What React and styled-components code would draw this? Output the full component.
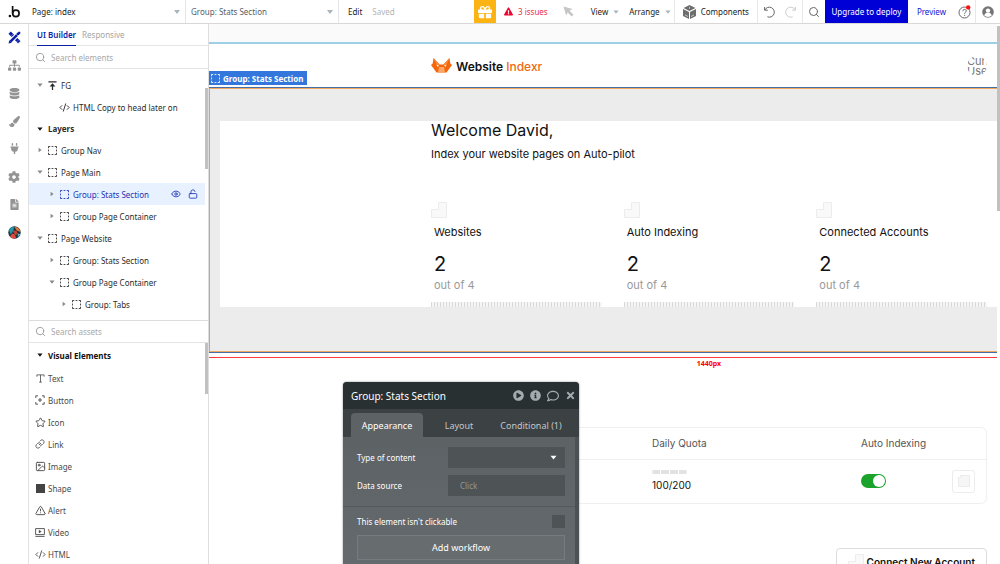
import React, { useState } from 'react';
import styled, { createGlobalStyle } from 'styled-components';
import { FaSitemap, FaDatabase, FaPaintBrush, FaPlug, FaCog, FaFileAlt, FaGift, FaExclamationTriangle, FaPlayCircle, FaInfoCircle, FaRegComment, FaTimes } from 'react-icons/fa';
import { Star, Link, Image as ImageIcon, TriangleAlert, Search, Eye, LockOpen, CodeXml } from 'lucide-react';

const EDITOR_FONT = '"Noto Sans", "Open Sans", sans-serif';
const PAGE_FONT = 'Inter, "Liberation Sans", sans-serif';
const BLUE = '#0b1fa8';

const GlobalStyle = createGlobalStyle`
  * {
    box-sizing: border-box;
  }
  body {
    margin: 0;
    font-family: ${EDITOR_FONT};
    font-size: 8px;
    color: #222;
    background: #fff;
  }
  button, input, select {
    font: inherit;
    color: inherit;
    border: 0;
    margin: 0;
    padding: 0;
    background: none;
    border-radius: 0;
    outline: none;
  }
  button {
    cursor: pointer;
  }
  svg {
    display: block;
    flex: none;
  }
`;

const Editor = styled.div`
  height: 100vh;
  display: flex;
  flex-direction: column;
  overflow: hidden;
`;

/* ---------- top bar ---------- */

const TopBar = styled.header`
  display: flex;
  align-items: stretch;
  height: 24px;
  flex: none;
  border-bottom: 1px solid #d8d8d8;
  white-space: nowrap;
`;

const LogoCell = styled.div`
  width: 29px;
  display: flex;
  align-items: center;
  justify-content: center;
`;

const SelectCell = styled.label`
  position: relative;
  width: ${props => props.$width}px;
  display: flex;
  align-items: center;
  border-right: 1px solid #e2e6e8;
`;

const TopSelect = styled.select`
  appearance: none;
  width: 100%;
  height: 100%;
  padding: 0 16px 0 ${props => (props.$muted ? 5 : 3)}px;
  color: ${props => (props.$muted ? '#55606a' : '#222')};
`;

const SelectCaret = styled.svg`
  position: absolute;
  right: 5px;
  pointer-events: none;
`;

const TopButton = styled.button`
  display: flex;
  align-items: center;
  gap: 5px;
  padding: 0 ${props => props.$pad || 0}px;
  color: ${props => props.$color || '#222'};
  border-left: ${props => (props.$line ? '1px solid #e8e8e8' : '0')};
`;

const EditButton = styled(TopButton)`
  margin-left: 9px;
`;

const Saved = styled.span`
  align-self: center;
  margin-left: 10px;
  color: #b4b4b4;
`;

const Spacer = styled.div`
  flex: 1;
`;

const Divide = styled.span`
  width: 3px;
  flex: none;
`;

const GiftButton = styled.button`
  width: 22px;
  background: #fcb415;
  color: #fff;
  display: flex;
  align-items: center;
  justify-content: center;
`;

const DeployButton = styled.button`
  width: 83px;
  background: #0000d6;
  color: #fff;
`;

const PreviewLink = styled.a`
  align-self: center;
  padding: 0 12px 0 9px;
  color: #1414d2;
  text-decoration: none;
`;

/* ---------- left side ---------- */

const Body = styled.div`
  display: flex;
  flex: 1;
  min-height: 0;
`;

const Rail = styled.nav`
  width: 29px;
  flex: none;
  border-right: 1px solid #e2e2e2;
`;

const RailItems = styled.div`
  display: flex;
  flex-direction: column;
  height: 222px;
`;

const RailButton = styled.button`
  flex: 1;
  display: flex;
  align-items: center;
  justify-content: center;
  color: ${props => (props.$active ? BLUE : '#949494')};
`;

const SidePanel = styled.aside`
  width: 180px;
  flex: none;
  display: flex;
  flex-direction: column;
  border-right: 1px solid #dedede;
`;

const PanelTabs = styled.div`
  display: flex;
  gap: 6px;
  height: 22px;
  flex: none;
  padding-left: 8px;
  border-bottom: 1px solid #e4e4e4;
`;

const PanelTab = styled.button`
  color: ${props => (props.$active ? BLUE : '#a5a5a5')};
  font-weight: ${props => (props.$active ? 600 : 400)};
  box-shadow: ${props => (props.$active ? `0 1px 0 ${BLUE}` : 'none')};
`;

const SearchBox = styled.label`
  display: flex;
  align-items: center;
  gap: 5px;
  height: 23px;
  flex: none;
  padding-left: 6px;
  border-bottom: 1px solid #e4e4e4;
  border-top: ${props => (props.$ruled ? '1px solid #dcdcdc' : '0')};
  color: #999;

  input {
    flex: 1;
    min-width: 0;
    color: #444;
  }
  input::placeholder {
    color: #a8a8a8;
    opacity: 1;
  }
`;

const ScrollArea = styled.div`
  display: flex;
  height: ${props => (props.$height ? `${props.$height}px` : 'auto')};
  flex: ${props => (props.$height ? 'none' : '1')};
  min-height: 0;
  overflow: hidden;
`;

const ScrollThumb = styled.div`
  width: 3px;
  flex: none;
  height: ${props => props.$height}px;
  margin-top: ${props => props.$top}px;
  background: #c1c1c1;
`;

const TreeList = styled.div`
  flex: 1;
  min-width: 0;
  display: flex;
  flex-direction: column;
  justify-content: flex-end;
  padding-bottom: 5px;
`;

const TreeRow = styled.div`
  display: flex;
  align-items: center;
  gap: ${props => (props.$section ? 5 : 4)}px;
  height: ${props => (props.$section ? 21 : 22)}px;
  flex: none;
  padding-left: ${props => 8 + props.$level * 12}px;
  padding-right: 7px;
  background: ${props => (props.$selected ? '#e8f1ff' : 'transparent')};
  color: ${props => (props.$selected ? '#1a33b8' : '#2b2b2b')};
  font-weight: ${props => (props.$section ? 700 : 400)};
  white-space: nowrap;
`;

const LeafGap = styled.span`
  width: 6px;
  flex: none;
`;

const IconSlot = styled.span`
  display: flex;
  justify-content: center;
  width: 10px;
  flex: none;
`;

const RowActions = styled.div`
  display: flex;
  align-items: center;
  gap: 7px;
  margin-left: auto;
`;

const AssetList = styled.div`
  flex: 1;
`;

const AssetRow = styled.button`
  display: flex;
  align-items: center;
  gap: 3px;
  width: 100%;
  height: 22px;
  padding-left: 6px;
  color: #4a4a4a;
`;

const AssetHeading = styled.div`
  display: flex;
  align-items: center;
  gap: 5px;
  height: 24px;
  padding-left: 8px;
  font-weight: 700;
  color: #111;
`;

/* ---------- canvas ---------- */

const Workspace = styled.main`
  position: relative;
  flex: 1;
  min-width: 0;
  display: flex;
  overflow: hidden;
`;

const CanvasView = styled.div`
  flex: 1;
  min-width: 0;
  overflow: hidden;
`;

const Artboard = styled.div`
  min-width: 1000px;
  font-family: ${PAGE_FONT};
  font-size: 11px;
  color: #111;
`;

const Content = styled.div`
  width: 556px;
  margin: 0 auto;
`;

const CanvasStrip = styled.div`
  height: 20px;
  background: #fafafa;
  border-bottom: 2px solid #9dcfe5;
`;

const SiteNav = styled.div`
  height: 43px;
  display: flex;
  align-items: center;
`;

const NavContent = styled(Content)`
  display: flex;
  align-items: center;
  justify-content: space-between;
`;

const Brand = styled.div`
  display: flex;
  align-items: center;
  gap: 4px;
  font-size: 12px;
  font-weight: 600;

  div {
    padding-top: 2px;
  }
  span {
    color: #f0690f;
    font-weight: 500;
  }
`;

const Avatar = styled.div`
  width: 20px;
  height: 20px;
  border-radius: 50%;
  overflow: hidden;
  line-height: 10px;
  color: #777;
`;

const SelectedSection = styled.section`
  position: relative;
  height: 264px;
  margin-top: 1px;
  padding-top: 32px;
  background: #ececec;
  border-top: 1px solid #f0a860;
  border-bottom: 1px solid #f0a860;
  box-shadow: inset 1px 0 0 #e0a060, 0 -1px 0 #456fa5, 0 1px 0 #456fa5;
`;

const SelectionLabel = styled.div`
  position: absolute;
  left: 0;
  bottom: 100%;
  margin-bottom: 4px;
  height: 14px;
  padding: 0 4px 0 2px;
  display: flex;
  align-items: center;
  gap: 3px;
  background: #3377dd;
  color: #fff;
  font-family: ${EDITOR_FONT};
  font-size: 8px;
  font-weight: 700;
  white-space: nowrap;
`;

const WhiteBlock = styled.div`
  margin: 0 11px;
  background: #fff;
`;

const Welcome = styled.h1`
  margin: 0;
  font-size: 16px;
  line-height: 18px;
  font-weight: 400;
`;

const Lead = styled.p`
  margin: 8px 0 0;
  line-height: 14px;
`;

const Stats = styled.div`
  display: grid;
  grid-template-columns: repeat(3, 1fr);
  gap: 22px;
  margin-top: 41px;
`;

const StatText = styled.div`
  padding: 7px 0 10px 3px;
  line-height: 14px;
`;

const StatNumber = styled.div`
  margin: 13px 0 2px;
  font-size: 20px;
  line-height: 24px;
`;

const StatTotal = styled.div`
  color: #999;
`;

const StatTicks = styled.div`
  height: 5px;
  background: repeating-linear-gradient(to right, #d8d8d8 0 1px, #f6f6f6 1px 3px);
`;

const WidthRuler = styled.div`
  margin-top: 5px;
  border-top: 1px solid #ff3b3b;
  padding-top: 1px;
  text-align: center;
  font-family: ${EDITOR_FONT};
  font-size: 7px;
  line-height: 9px;
  font-weight: 700;
  color: #f00;
`;

const TableFrame = styled.div`
  margin-top: 59px;
  border: 1px solid #efefef;
  border-radius: 6px;
`;

const SitesTable = styled.table`
  width: 100%;
  table-layout: fixed;
  border-collapse: collapse;
  font-size: 10px;

  th, td {
    padding: 0 0 0 12px;
    text-align: left;
    vertical-align: middle;
  }
  th {
    height: 31px;
    font-weight: 400;
    color: #555;
    border-bottom: 1px solid #efefef;
  }
  td {
    height: 44px;
  }
`;

const Quota = styled.div`
  line-height: 14px;
`;

const QuotaBar = styled.div`
  display: flex;
  gap: 1px;
  width: 35px;
  height: 4px;
  margin-bottom: 4px;
  border-radius: 2px;
  overflow: hidden;

  span {
    flex: 1;
    background: #e2e2e2;
  }
`;

const Switch = styled.input`
  appearance: none;
  display: block;
  width: 25px;
  height: 14px;
  border-radius: 7px;
  background: ${props => (props.checked ? '#1ca32c' : '#ccc')};
  cursor: pointer;

  &::before {
    content: '';
    display: block;
    width: 12px;
    height: 12px;
    margin: 1px 0 0 ${props => (props.checked ? 12 : 1)}px;
    border-radius: 50%;
    background: #fff;
  }
`;

const IconButton = styled.button`
  display: flex;
  align-items: center;
  justify-content: center;
  width: 23px;
  height: 23px;
  margin-left: auto;
  margin-right: 11px;
  border: 1px solid #ececec;
  border-radius: 3px;
`;

const ConnectButton = styled.button`
  display: flex;
  align-items: center;
  gap: 3px;
  margin: 44px 0 0 auto;
  padding: 4px 11px;
  border: 1px solid #dcdcdc;
  border-radius: 4px;
  font-size: 10px;
  font-weight: 600;
  line-height: 18px;
`;

/* ---------- property editor ---------- */

const Popup = styled.div`
  position: absolute;
  left: 134px;
  top: 358px;
  width: 236px;
  border-radius: 4px 4px 0 0;
  overflow: hidden;
  background: #5d6265;
  color: #fff;
  box-shadow: 0 0 2px rgba(0, 0, 0, 0.5);
`;

const PopupHeader = styled.div`
  display: flex;
  align-items: center;
  gap: 6px;
  height: 27px;
  padding: 0 3px 0 8px;
  background: #293032;
  font-size: 10px;
`;

const PopupTitle = styled.div`
  flex: 1;
`;

const HeaderButton = styled.button`
  color: #a4abae;
`;

const PopupTabs = styled.div`
  display: flex;
  align-items: flex-end;
  height: 28px;
  padding: 0 12px 0 8px;
  background: #3c4143;
`;

const PopupTab = styled.button`
  height: 24px;
  flex: 1 1 0;
  border-radius: 4px 4px 0 0;
  font-size: 9px;
  white-space: nowrap;
  background: ${props => (props.$active ? '#5d6265' : 'transparent')};
  color: ${props => (props.$active ? '#fff' : '#c3c7c9')};
`;

const PopupBody = styled.div`
  padding: 10px 10px 10px 14px;
  border-right: 4px solid #4c5154;
  background: linear-gradient(#5d6265, #646a6d);
`;

const Field = styled.div`
  display: flex;
  align-items: center;
  justify-content: space-between;
  height: 21px;
  margin-bottom: 7px;
`;

const CheckField = styled(Field)`
  margin-bottom: 3px;
`;

const FieldSelect = styled.div`
  position: relative;
  display: flex;
  align-items: center;
  width: 117px;
  height: 21px;

  select {
    appearance: none;
    width: 100%;
    height: 100%;
    background: #4e5356;
  }
  svg {
    position: absolute;
    right: 8px;
    pointer-events: none;
  }
`;

const FieldInput = styled.input`
  width: 117px;
  height: 21px;
  padding: 0 12px;
  background: #4e5356;

  &::placeholder {
    color: #92979a;
    opacity: 1;
  }
`;

const Divider = styled.div`
  margin: 10px -10px 4px -14px;
  border-top: 1px solid #54595c;
`;

const Check = styled.input`
  appearance: none;
  width: 13px;
  height: 13px;
  background: ${props => (props.checked ? '#aab0b3' : '#4e5356')};
`;

const WorkflowButton = styled.button`
  display: block;
  width: 100%;
  height: 25px;
  border: 1px solid #757b7e;
  background: #676c6f;
  font-size: 9px;
`;

/* ---------- drawings ---------- */

const Caret = ({ open = false, color = '#888', size = 6 }) => (
  <svg width={size} height={size} viewBox="0 0 6 6" fill={color} aria-hidden="true">
    <path d={open ? 'M.4 1.4h5.200L3 4.800z' : 'M1.600.8v4.400L4.600 3z'} />
  </svg>
);

const DashedBox = ({ size = 9 }) => (
  <svg width={size} height={size} viewBox="0 0 10 10" fill="none" stroke="currentColor" strokeWidth="1" aria-hidden="true">
    <path d="M.5 2.5v-2h2M4 .5h2M7.5.5h2v2M9.5 4v2M9.5 7.5v2h-2M6 9.5H4M2.5 9.5h-2v-2M.5 6V4" />
  </svg>
);

const BubbleLogo = () => (
  <svg width="13" height="14" viewBox="0 0 13 14" aria-hidden="true">
    <circle cx="1.9" cy="11" r="1.3" fill="#111" />
    <path d="M4.6 1v7.4" stroke="#111" strokeWidth="1.7" />
    <circle cx="7.9" cy="8.4" r="3.2" fill="none" stroke="#111" strokeWidth="1.7" />
  </svg>
);

const DesignIcon = () => (
  <svg width="13" height="13" viewBox="0 0 14 14" fill="none" stroke="currentColor" aria-hidden="true">
    <path d="M3.6 3.6l-1.800-1.800M12.200 12.200L8.800 8.800M5.200 5.200L1.800 1.800" strokeWidth="3.6" />
    <path d="M2.600 11.400L9.600 4.400" strokeWidth="2.800" />
    <path d="M10.600 3.400l1.400-1.400" strokeWidth="2.800" strokeLinecap="round" />
    <path d="M.6 13.400l.8-3.400 2.600 2.600z" fill="currentColor" stroke="none" />
    <path d="M3.800 4.800l1-1M9.600 11.400l1-1M11.200 13l1-1" stroke="#fff" strokeWidth=".7" />
  </svg>
);

const PluginAvatar = () => (
  <svg width="13" height="13" viewBox="0 0 13 13" aria-hidden="true">
    <circle cx="6.5" cy="6.5" r="6.2" fill="#1b3444" />
    <path d="M1 4.5A6.2 6.2 0 0 1 6 .4L5.6 4 2.8 8.6z" fill="#1f9aa6" />
    <path d="M6.4 1A6 6 0 0 1 12.3 6L8.8 4.6z" fill="#e87833" />
    <path d="M2 10.4l2.2-3 2.4 1.2 1.7 3.7A6 6 0 0 1 2 10.4z" fill="#e34c3c" />
    <path d="M4.5 4.4l4 .4 1.3 3-2.6 1.6z" fill="#c2452f" />
    <path d="M9.8 7.4l2.4.8-2.4 3z" fill="#69c3cf" />
  </svg>
);

const FloatingIcon = () => (
  <svg width="9" height="9" viewBox="0 0 10 10" fill="none" stroke="currentColor" strokeWidth="1.4" aria-hidden="true">
    <path d="M.5 1h9M5 10V4" />
    <path d="M1.8 6.2L5 2.6l3.2 3.6z" fill="currentColor" stroke="none" />
  </svg>
);

const ArrowIcon = () => (
  <svg width="11" height="11" viewBox="0 0 11 11" fill="#c6c6c6" aria-hidden="true">
    <path d="M.5.5l9 2.600-3 1.700 4 4-1.800 1.800-4-4-1.600 3z" />
  </svg>
);

const CubeIcon = () => (
  <svg width="13" height="14" viewBox="0 0 13 14" fill="#6d6d6d" aria-hidden="true">
    <path d="M6.5 0L12.4 3 6.5 6 .6 3z" />
    <path d="M0 4l6 3v7l-6-3z" />
    <path d="M13 4L7 7v7l6-3z" />
    <path d="M6.5 3.8v-2M8 11.5l3-1.6M5 11.5L2 9.9" stroke="#fff" strokeWidth=".6" />
  </svg>
);

const TurnIcon = ({ flip, color }) => (
  <svg width="12" height="12" viewBox="0 0 12 12" fill="none" stroke={color} strokeWidth="1" aria-hidden="true">
    <g transform={flip ? 'translate(12 0) scale(-1 1)' : undefined}>
      <path d="M1.6 1v3.2h3.2M1.8 4A5 5 0 1 1 4.4 10.8" />
    </g>
  </svg>
);

const HelpIcon = () => (
  <svg width="14" height="14" viewBox="0 0 14 14" aria-hidden="true">
    <circle cx="6.5" cy="7.5" r="5.5" fill="none" stroke="#666" strokeWidth="1" />
    <path d="M4.8 6.2c0-2.4 3.5-2.3 3.5-.2 0 1.3-1.7 1.3-1.7 2.7M6.6 9.8v1.1" fill="none" stroke="#666" strokeWidth="1" />
    <circle cx="10.2" cy="2.4" r="2.2" fill="#f11" />
  </svg>
);

const UserIcon = () => (
  <svg width="12" height="12" viewBox="0 0 12 12" aria-hidden="true">
    <circle cx="6" cy="6" r="5.8" fill="#757575" />
    <circle cx="6" cy="4.6" r="2.2" fill="#fff" />
    <path d="M2.2 9.6c.6-2.3 2-2.8 3.8-2.8s3.2.5 3.8 2.8C7.9 11.3 4.1 11.3 2.2 9.6z" fill="#fff" />
  </svg>
);

const FoxLogo = () => (
  <svg width="21" height="15" viewBox="0 0 21 15" aria-hidden="true">
    <path d="M2.5 0l6.1 6.5h3.8L18.5 0l.8 5.6L21 7l-5.5 7.5h-10L0 7l1.700-1.400z" fill="#f4660c" />
    <path d="M2.5 0l6 6.5L6 8z" fill="#f98a3a" />
    <path d="M18.5 0l-6 6.5L15 8z" fill="#f98a3a" />
    <path d="M8 9h5l1 5.5H7z" fill="#fba566" />
    <path d="M5.600 6.800l2.600 1-1.800.9zM15.400 6.800l-2.600 1 1.800.9z" fill="#fff" />
  </svg>
);

const Placeholder = () => (
  <svg width="16" height="16" viewBox="0 0 16 16" fill="#f9f9f9" stroke="#ececec" aria-hidden="true">
    <path d="M7.500.5h8v15H.5v-8h7z" />
  </svg>
);

const SmallPlaceholder = () => (
  <svg width="12" height="12" viewBox="0 0 12 12" fill="#f6f6f6" stroke="#ebebeb" aria-hidden="true">
    <path d="M2.500.5h9v11H.5v-9h2z" />
  </svg>
);

const TextIcon = () => (
  <svg width="9" height="9" viewBox="0 0 10 10" fill="none" stroke="currentColor" strokeWidth=".9" aria-hidden="true">
    <path d="M1 3V1h8v2M5 1v8M3.5 9h3" />
  </svg>
);

const ButtonIcon = () => (
  <svg width="10" height="10" viewBox="0 0 10 10" fill="none" stroke="currentColor" strokeWidth=".9" aria-hidden="true">
    <path d="M.8 3V.8H3M7 .8h2.2V3M9.2 7v2.2H7M3 9.200H.8V7M5 3v4M3 5h4" />
  </svg>
);

const ShapeIcon = () => (
  <svg width="9" height="9" viewBox="0 0 9 9" aria-hidden="true">
    <rect width="9" height="9" fill="#444" />
  </svg>
);

const VideoIcon = () => (
  <svg width="10" height="9" viewBox="0 0 10 9" fill="none" stroke="currentColor" strokeWidth=".9" aria-hidden="true">
    <path d="M.6.6h8.8v6H.6zM.4 8.400h9.2" />
    <path d="M4 2.300v2.600l2.300-1.300z" fill="currentColor" strokeWidth=".4" />
  </svg>
);

const railItems = [
  { name: 'Design', icon: <DesignIcon />, active: true },
  { name: 'Workflow', icon: <FaSitemap size={13} /> },
  { name: 'Data', icon: <FaDatabase size={11} /> },
  { name: 'Styles', icon: <FaPaintBrush size={11} /> },
  { name: 'Plugins', icon: <FaPlug size={11} /> },
  { name: 'Settings', icon: <FaCog size={12} /> },
  { name: 'Logs', icon: <FaFileAlt size={11} /> },
  { name: 'Assistant', icon: <PluginAvatar /> },
];

const treeRows = [
  { label: 'Overlays', level: 0, section: true, open: true },
  { label: 'FG', level: 0, open: true, icon: <FloatingIcon /> },
  { label: 'HTML Copy to head later on', level: 1, leaf: true, icon: <CodeXml size={11} strokeWidth={2} /> },
  { label: 'Layers', level: 0, section: true, open: true },
  { label: 'Group Nav', level: 0 },
  { label: 'Page Main', level: 0, open: true },
  { label: 'Group: Stats Section', level: 1, selected: true },
  { label: 'Group Page Container', level: 1 },
  { label: 'Page Website', level: 0, open: true },
  { label: 'Group: Stats Section', level: 1 },
  { label: 'Group Page Container', level: 1, open: true },
  { label: 'Group: Tabs', level: 2 },
];

const assets = [
  { label: 'Text', icon: <TextIcon /> },
  { label: 'Button', icon: <ButtonIcon /> },
  { label: 'Icon', icon: <Star size={11} strokeWidth={2} /> },
  { label: 'Link', icon: <Link size={10} strokeWidth={2} /> },
  { label: 'Image', icon: <ImageIcon size={11} strokeWidth={2} /> },
  { label: 'Shape', icon: <ShapeIcon /> },
  { label: 'Alert', icon: <TriangleAlert size={11} strokeWidth={2} /> },
  { label: 'Video', icon: <VideoIcon /> },
  { label: 'HTML', icon: <CodeXml size={11} strokeWidth={2} /> },
];

const stats = ['Websites', 'Auto Indexing', 'Connected Accounts'];

function EditorTopBar() {
  return (
    <TopBar>
      <LogoCell><BubbleLogo /></LogoCell>
      <SelectCell $width={157}>
        <TopSelect aria-label="Page">
          <option>Page: index</option>
        </TopSelect>
        <SelectCaret width="6" height="4" viewBox="0 0 6 4" fill="#aab4bb"><path d="M0 0h6L3 4z" /></SelectCaret>
      </SelectCell>
      <SelectCell $width={153}>
        <TopSelect aria-label="Element" $muted>
          <option>Group: Stats Section</option>
        </TopSelect>
        <SelectCaret width="6" height="4" viewBox="0 0 6 4" fill="#aab4bb"><path d="M0 0h6L3 4z" /></SelectCaret>
      </SelectCell>
      <EditButton>Edit</EditButton>
      <Saved>Saved</Saved>
      <Spacer />
      <GiftButton aria-label="Offers"><FaGift size={14} /></GiftButton>
      <TopButton $pad={8} $color="#e8304f"><FaExclamationTriangle size={9} color="#f0022e" />3 issues</TopButton>
      <TopButton $pad={7} aria-label="Inspect"><ArrowIcon /></TopButton>
      <TopButton $pad={10}>View<Caret open color="#aab4bb" /></TopButton>
      <TopButton>Arrange<Caret open color="#aab4bb" /></TopButton>
      <Divide />
      <TopButton $pad={8} $line><CubeIcon />Components</TopButton>
      <TopButton $pad={5} $line aria-label="Undo"><TurnIcon color="#666" /></TopButton>
      <TopButton $pad={5} aria-label="Redo"><TurnIcon flip color="#ccc" /></TopButton>
      <TopButton $pad={5} $line aria-label="Search"><Search size={12} color="#666" strokeWidth={2} /></TopButton>
      <DeployButton>Upgrade to deploy</DeployButton>
      <PreviewLink href="#preview">Preview</PreviewLink>
      <TopButton aria-label="Help"><HelpIcon /></TopButton>
      <Divide />
      <TopButton $pad={6} $line aria-label="Account"><UserIcon /></TopButton>
    </TopBar>
  );
}

function ElementsPanel() {
  return (
    <SidePanel>
      <PanelTabs role="tablist">
        <PanelTab role="tab" aria-selected="true" $active>UI Builder</PanelTab>
        <PanelTab role="tab" aria-selected="false">Responsive</PanelTab>
      </PanelTabs>
      <SearchBox>
        <Search size={11} strokeWidth={2} />
        <input placeholder="Search elements" aria-label="Search elements" />
      </SearchBox>
      <ScrollArea $height={251}>
        <TreeList role="tree">
          {treeRows.map((row, i) => (
            <TreeRow key={i} role="treeitem" $level={row.level} $section={row.section} $selected={row.selected}>
              {row.leaf ? <LeafGap /> : <Caret open={row.open} color={row.section ? '#111' : '#888'} />}
              {!row.section && <IconSlot>{row.icon || <DashedBox />}</IconSlot>}
              {row.label}
              {row.selected && (
                <RowActions>
                  <Eye size={10} strokeWidth={2} />
                  <LockOpen size={10} strokeWidth={2} />
                </RowActions>
              )}
            </TreeRow>
          ))}
        </TreeList>
        <ScrollThumb $top={19} $height={81} />
      </ScrollArea>
      <SearchBox $ruled>
        <Search size={11} strokeWidth={2} />
        <input placeholder="Search assets" aria-label="Search assets" />
      </SearchBox>
      <ScrollArea>
        <AssetList>
          <AssetHeading><Caret open color="#111" />Visual Elements</AssetHeading>
          {assets.map(asset => (
            <AssetRow key={asset.label}>
              <IconSlot>{asset.icon}</IconSlot>
              {asset.label}
            </AssetRow>
          ))}
        </AssetList>
        <ScrollThumb $top={0} $height={51} />
      </ScrollArea>
    </SidePanel>
  );
}

function PropertyEditor() {
  const [clickable, setClickable] = useState(false);

  return (
    <Popup role="dialog" aria-label="Group: Stats Section">
      <PopupHeader>
        <PopupTitle>Group: Stats Section</PopupTitle>
        <HeaderButton aria-label="Play"><FaPlayCircle size={11} /></HeaderButton>
        <HeaderButton aria-label="Info"><FaInfoCircle size={11} /></HeaderButton>
        <HeaderButton aria-label="Comment"><FaRegComment size={12} /></HeaderButton>
        <HeaderButton aria-label="Close"><FaTimes size={11} /></HeaderButton>
      </PopupHeader>
      <PopupTabs role="tablist">
        <PopupTab role="tab" aria-selected="true" $active>Appearance</PopupTab>
        <PopupTab role="tab" aria-selected="false">Layout</PopupTab>
        <PopupTab role="tab" aria-selected="false">Conditional (1)</PopupTab>
      </PopupTabs>
      <PopupBody>
        <Field>
          <label htmlFor="content-type">Type of content</label>
          <FieldSelect>
            <select id="content-type" defaultValue="">
              <option value="" />
            </select>
            <Caret open color="#fff" size={7} />
          </FieldSelect>
        </Field>
        <Field>
          <label htmlFor="data-source">Data source</label>
          <FieldInput id="data-source" placeholder="Click" />
        </Field>
        <Divider />
        <CheckField>
          <label htmlFor="not-clickable">This element isn't clickable</label>
          <Check id="not-clickable" type="checkbox" checked={clickable} onChange={() => setClickable(!clickable)} />
        </CheckField>
        <WorkflowButton>Add workflow</WorkflowButton>
      </PopupBody>
    </Popup>
  );
}

function App() {
  const [autoIndex, setAutoIndex] = useState(true);

  return (
    <Editor>
      <GlobalStyle />
      <EditorTopBar />
      <Body>
        <Rail>
          <RailItems>
            {railItems.map(item => (
              <RailButton key={item.name} aria-label={item.name} $active={item.active}>{item.icon}</RailButton>
            ))}
          </RailItems>
        </Rail>
        <ElementsPanel />
        <Workspace>
          <CanvasView>
            <Artboard>
              <CanvasStrip />
              <SiteNav>
                <NavContent>
                  <Brand><FoxLogo /><div>Website <span>Indexr</span></div></Brand>
                  <Avatar>Current User</Avatar>
                </NavContent>
              </SiteNav>
              <SelectedSection>
                <SelectionLabel><DashedBox />Group: Stats Section</SelectionLabel>
                <WhiteBlock>
                  <Content>
                    <Welcome>Welcome David,</Welcome>
                    <Lead>Index your website pages on Auto-pilot</Lead>
                    <Stats>
                      {stats.map(label => (
                        <div key={label}>
                          <Placeholder />
                          <StatText>
                            {label}
                            <StatNumber>2</StatNumber>
                            <StatTotal>out of 4</StatTotal>
                          </StatText>
                          <StatTicks />
                        </div>
                      ))}
                    </Stats>
                  </Content>
                </WhiteBlock>
              </SelectedSection>
              <WidthRuler>1440px</WidthRuler>
              <Content>
                <TableFrame>
                  <SitesTable>
                    <colgroup>
                      <col width="208" />
                      <col width="209" />
                      <col width="80" />
                      <col />
                    </colgroup>
                    <thead>
                      <tr>
                        <th />
                        <th>Daily Quota</th>
                        <th>Auto Indexing</th>
                        <th />
                      </tr>
                    </thead>
                    <tbody>
                      <tr>
                        <td />
                        <td>
                          <QuotaBar><span /><span /><span /><span /></QuotaBar>
                          <Quota>100/200</Quota>
                        </td>
                        <td>
                          <Switch type="checkbox" role="switch" aria-label="Auto Indexing" checked={autoIndex} onChange={() => setAutoIndex(!autoIndex)} />
                        </td>
                        <td>
                          <IconButton aria-label="Remove"><SmallPlaceholder /></IconButton>
                        </td>
                      </tr>
                    </tbody>
                  </SitesTable>
                </TableFrame>
                <ConnectButton><Placeholder />Connect New Account</ConnectButton>
              </Content>
            </Artboard>
          </CanvasView>
          <ScrollThumb $top={2} $height={185} />
          <PropertyEditor />
        </Workspace>
      </Body>
    </Editor>
  );
}

export default App;
